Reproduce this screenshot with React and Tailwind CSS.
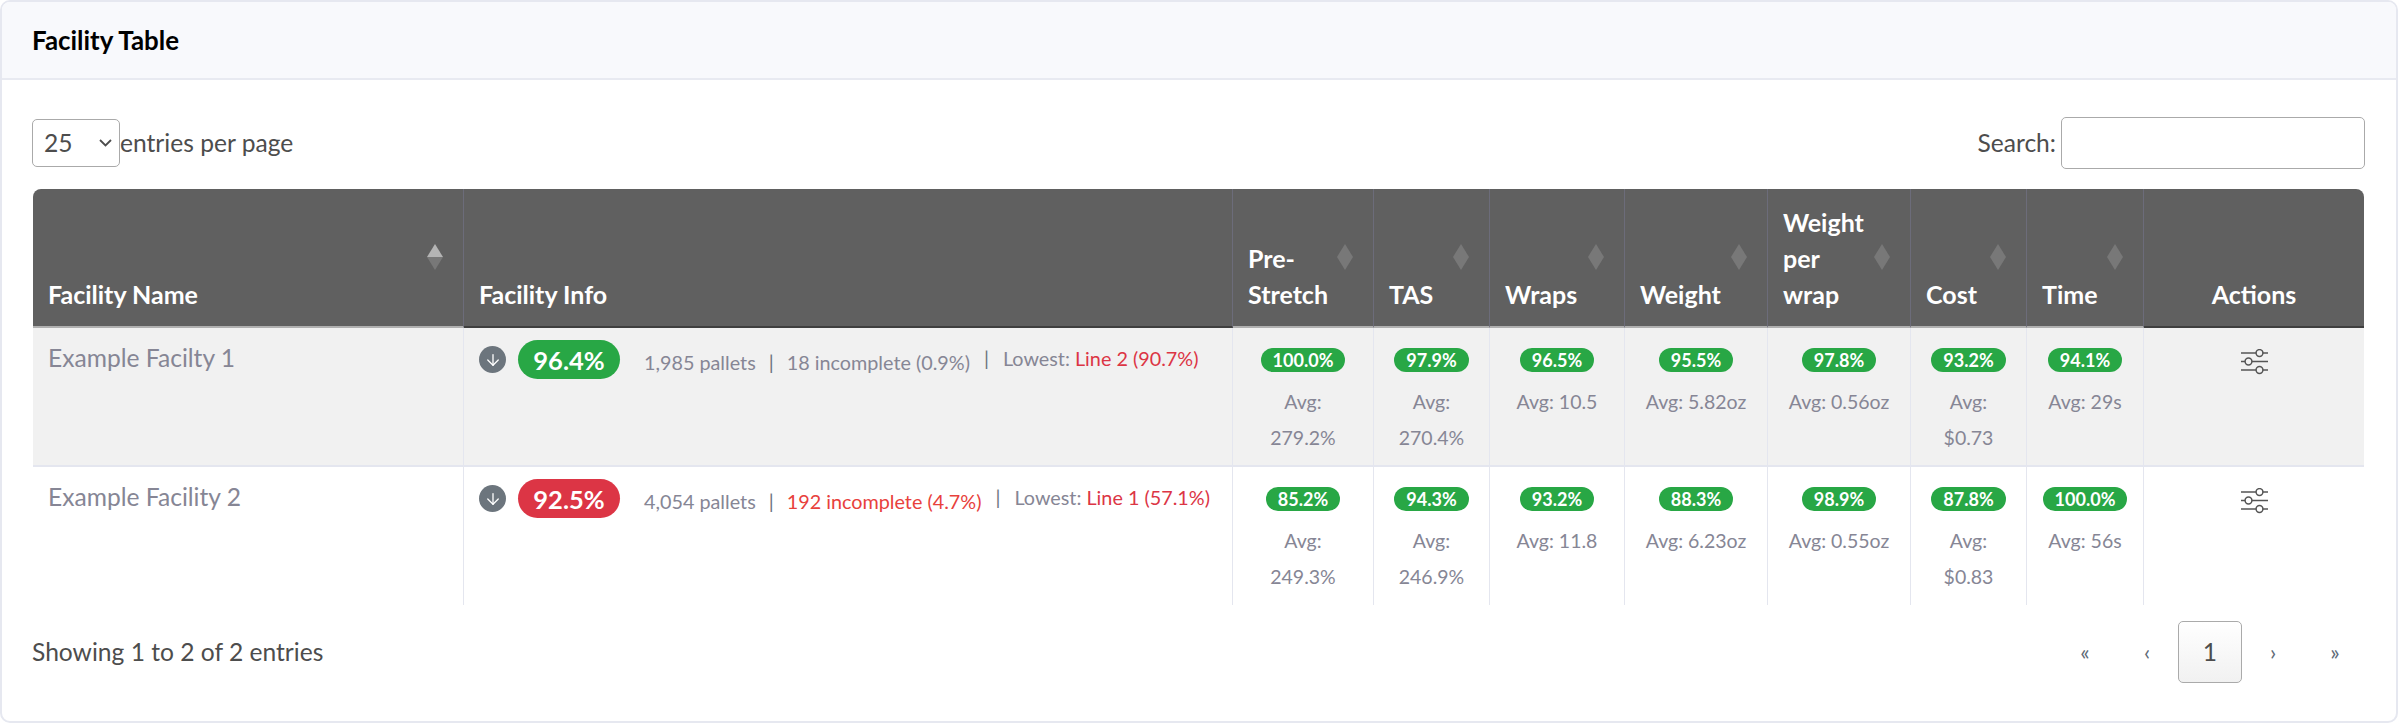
import { ArrowDown } from "lucide-react";

const rows = [
  {
    name: "Example Facilty 1",
    score: "96.4%",
    scoreColor: "bg-[#28a745]",
    pallets: "1,985 pallets",
    incomplete: "18 incomplete (0.9%)",
    incompleteColor: "text-[#868695]",
    lowest: "Line 2 (90.7%)",
    rowColor: "bg-[#f1f1f1]",
    stats: [
      { pct: "100.0%", avg: ["Avg:", "279.2%"] },
      { pct: "97.9%", avg: ["Avg:", "270.4%"] },
      { pct: "96.5%", avg: ["Avg: 10.5"] },
      { pct: "95.5%", avg: ["Avg: 5.82oz"] },
      { pct: "97.8%", avg: ["Avg: 0.56oz"] },
      { pct: "93.2%", avg: ["Avg:", "$0.73"] },
      { pct: "94.1%", avg: ["Avg: 29s"] },
    ],
  },
  {
    name: "Example Facility 2",
    score: "92.5%",
    scoreColor: "bg-[#dc3545]",
    pallets: "4,054 pallets",
    incomplete: "192 incomplete (4.7%)",
    incompleteColor: "text-[#e8413c]",
    lowest: "Line 1 (57.1%)",
    rowColor: "bg-white",
    stats: [
      { pct: "85.2%", avg: ["Avg:", "249.3%"] },
      { pct: "94.3%", avg: ["Avg:", "246.9%"] },
      { pct: "93.2%", avg: ["Avg: 11.8"] },
      { pct: "88.3%", avg: ["Avg: 6.23oz"] },
      { pct: "98.9%", avg: ["Avg: 0.55oz"] },
      { pct: "87.8%", avg: ["Avg:", "$0.83"] },
      { pct: "100.0%", avg: ["Avg: 56s"] },
    ],
  },
];

const statColumns = [
  { lines: ["Pre-", "Stretch"], width: "w-[141px]" },
  { lines: ["TAS"], width: "w-[116px]" },
  { lines: ["Wraps"], width: "w-[135px]" },
  { lines: ["Weight"], width: "w-[143px]" },
  { lines: ["Weight", "per", "wrap"], width: "w-[143px]" },
  { lines: ["Cost"], width: "w-[116px]" },
  { lines: ["Time"], width: "w-[117px]" },
];

const SortArrows = ({ active }) => (
  <svg className="absolute right-[20px] top-[55px]" width="16" height="26" viewBox="0 0 16 26">
    <polygon points="8,0 16,13 0,13" fill={active ? "#b4b4b4" : "#787878"} />
    <polygon points="0,13 16,13 8,26" fill="#787878" />
  </svg>
);

const SlidersIcon = () => (
  <svg className="mx-auto mt-[7px]" width="27" height="26" viewBox="0 0 27 26" fill="none" stroke="#555555" strokeWidth="1.5">
    <path d="M0 4h15M22 4h5M0 12.5h4M11 12.5h16M0 21h15M22 21h5" />
    <circle cx="18.5" cy="4" r="3.4" />
    <circle cx="7.5" cy="12.5" r="3.4" />
    <circle cx="18.5" cy="21" r="3.4" />
  </svg>
);

const App = () => {
  return (
    <div className="h-[723px] w-full bg-white font-['Lato','Noto_Sans',sans-serif] text-[24.6px] leading-[36px] text-[#4d4d4d]">
      <div className="flex h-full flex-col overflow-hidden rounded-[10px] border-2 border-[#e6e8f0]">
        <div className="flex h-[78px] shrink-0 items-center border-b-2 border-[#e8eaf1] bg-[#f8f9fc] px-[30px]">
          <h2 className="text-[25.9px] font-bold text-black">Facility Table</h2>
        </div>

        <div className="px-[30px]">
          <div className="mt-[37px] mb-[20px] flex h-[52px] items-center justify-between pr-px">
            <div className="flex items-center">
              <div className="relative">
                <select className="h-[48px] w-[88px] appearance-none rounded-[5px] border border-[#aaaaaa] bg-white pl-[11px] text-[24.6px]">
                  <option>25</option>
                </select>
                <svg className="pointer-events-none absolute top-[20px] right-[8px]" width="13" height="8" viewBox="0 0 13 8" fill="none" stroke="#4d4d4d" strokeWidth="1.8">
                  <path d="M1 1l5.5 5.5L12 1" />
                </svg>
              </div>
              <span>entries per page</span>
            </div>
            <div className="flex items-center gap-[5px]">
              <span>Search:</span>
              <input className="h-[52px] w-[304px] rounded-[5px] border border-[#aaaaaa] bg-white" />
            </div>
          </div>

          <table className="ml-px w-[2331px] table-fixed border-separate border-spacing-0">
            <colgroup>
              <col className="w-[431px]" />
              <col className="w-[769px]" />
              {statColumns.map((col, index) => (
                <col key={index} className={col.width} />
              ))}
              <col className="w-[220px]" />
            </colgroup>
            <thead>
              <tr className="bg-[#606060] text-left align-bottom text-[25px] text-white">
                <th className="relative rounded-tl-[8px] border-r border-b-2 border-r-[#6c6c7a] border-b-[#b0b0b0] px-[15px] pt-[15px] pb-[14px] font-bold">
                  Facility Name
                  <SortArrows active />
                </th>
                <th className="border-r border-b-2 border-r-[#6c6c7a] border-b-[#3f3f3f] px-[15px] pt-[15px] pb-[14px] font-bold">Facility Info</th>
                {statColumns.map((col, index) => (
                  <th key={index} className="relative border-r border-b-2 border-r-[#6c6c7a] border-b-[#b0b0b0] px-[15px] pt-[15px] pb-[14px] font-bold">
                    {col.lines.map((line) => (
                      <div key={line}>{line}</div>
                    ))}
                    <SortArrows />
                  </th>
                ))}
                <th className="rounded-tr-[8px] border-b-2 border-b-[#3f3f3f] px-[15px] pt-[15px] pb-[14px] text-center font-bold">Actions</th>
              </tr>
            </thead>
            <tbody>
              {rows.map((row, rowIndex) => (
                <tr key={row.name} className={`${row.rowColor} align-top text-[#868695]`}>
                  <td className={`border-r border-[#e4e6ef] px-[15px] pt-[12px] pb-[15px] ${rowIndex === 0 ? "border-b-2" : ""}`}>{row.name}</td>
                  <td className={`border-r border-[#e4e6ef] px-[15px] pt-[12px] pb-[15px] ${rowIndex === 0 ? "border-b-2" : ""}`}>
                    <div className="flex h-[39px] items-center text-[19.8px] whitespace-nowrap">
                      <span className="mr-[12px] flex h-[27px] w-[27px] items-center justify-center rounded-full bg-[#6c757d] text-white">
                        <ArrowDown size={18} strokeWidth={1.75} />
                      </span>
                      <span className={`${row.scoreColor} mr-[24px] flex h-[39px] w-[102px] items-center justify-center rounded-full text-[25.5px] font-bold text-white`}>
                        {row.score}
                      </span>
                      <span className="mt-[4px]">{row.pallets}</span>
                      <span className="mx-[13px] mt-[4px] text-[#6c757d]">|</span>
                      <span className={`mt-[4px] ${row.incompleteColor}`}>{row.incomplete}</span>
                      <span className="mx-[14px] -mt-[4px] text-[#6c757d]">|</span>
                      <span className="-mt-[4px]">
                        Lowest: <span className="text-[#dc3545]">{row.lowest}</span>
                      </span>
                    </div>
                  </td>
                  {row.stats.map((stat, index) => (
                    <td key={index} className={`border-r border-[#e4e6ef] px-[15px] pt-[14px] text-center text-[19.5px] ${rowIndex === 0 ? "border-b-2 pb-[9px]" : "pb-[10px]"}`}>
                      <div className="flex h-[42px] items-start justify-center pt-[6px]">
                        <span className="rounded-full bg-[#28a745] px-[12px] text-[18px] leading-[24px] font-bold text-white">{stat.pct}</span>
                      </div>
                      {stat.avg.map((line) => (
                        <div key={line} className="whitespace-nowrap">{line}</div>
                      ))}
                    </td>
                  ))}
                  <td className={`border-[#e4e6ef] p-[14px] ${rowIndex === 0 ? "border-b-2" : ""}`}>
                    <SlidersIcon />
                  </td>
                </tr>
              ))}
            </tbody>
          </table>

          <div className="mt-[16px] flex items-center justify-between">
            <span>Showing 1 to 2 of 2 entries</span>
            <div className="flex items-center text-[#5f6b78]">
              <span className="flex h-[62px] w-[62px] items-center justify-center text-[22px]">«</span>
              <span className="flex h-[62px] w-[62px] items-center justify-center text-[22px]">‹</span>
              <span className="flex h-[62px] w-[64px] items-center justify-center rounded-[5px] border border-[#aaaaaa] bg-linear-to-b from-white to-[#f1f1f1] text-[24.6px] text-[#4d4d4d]">1</span>
              <span className="flex h-[62px] w-[62px] items-center justify-center text-[22px]">›</span>
              <span className="flex h-[62px] w-[62px] items-center justify-center text-[22px]">»</span>
            </div>
          </div>
        </div>
      </div>
    </div>
  );
};

export default App;
